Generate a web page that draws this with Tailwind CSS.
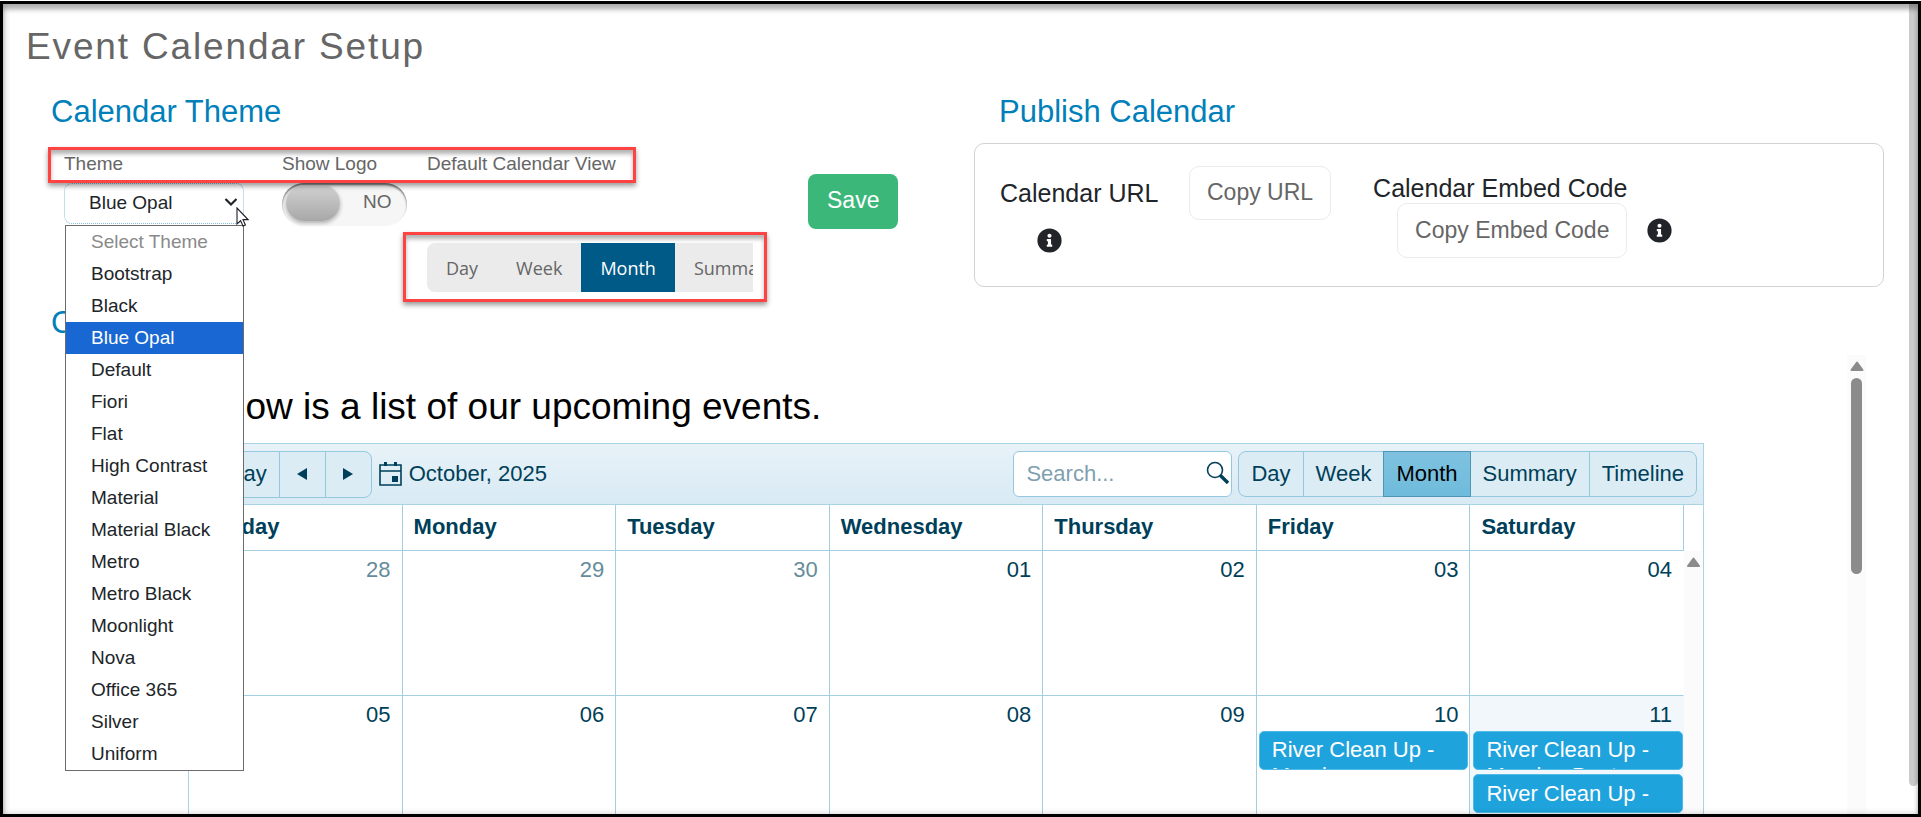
<!DOCTYPE html>
<html lang="en">
<head>
    <meta charset="UTF-8">
    <meta name="viewport" content="width=device-width, initial-scale=1.0">
    <title>Event Calendar Setup</title>
    <script src="https://cdn.jsdelivr.net/npm/@tailwindcss/browser@4"></script>
</head>
<body class="h-screen overflow-hidden bg-white pt-px font-['Liberation_Sans',Arial,sans-serif]">
    <div class="relative h-full overflow-hidden border-[3px] border-black pt-[21px] pl-[45px] pr-[34px]">
        <!-- Window edge shadow and page scrollbar -->
        <div class="pointer-events-none absolute inset-0 z-30 shadow-[inset_0_6px_4px_rgba(0,0,0,0.25),inset_1px_0_6px_rgba(0,0,0,0.2)]"></div>
        <div class="absolute right-0 top-0 h-[782px] w-[9px] rounded-b-md bg-[#cbcbcb]"></div>

        <h1 class="-ml-[22px] text-[37px]/[44px] tracking-wider text-[#666]">Event Calendar Setup</h1>

        <div class="mt-[25px] grid grid-cols-2 gap-4">
            <!-- Calendar theme -->
            <section class="relative">
                <h2 class="pl-[3px] text-[31px]/[36px] text-[#0080ba]">Calendar Theme</h2>
                <div class="pointer-events-none absolute left-0 top-[53px] z-10 h-9 w-[588px] border-[3px] border-[#ff4343] shadow-[0_3px_5px_rgba(0,0,0,0.4),inset_0_4px_4px_rgba(0,0,0,0.3)]"></div>
                <div class="mt-[22px] flex items-start pl-4 text-[19px]/[24px] text-[#666]">
                    <div class="mr-[38px] w-[180px] shrink-0">
                        <label for="theme" class="block">Theme</label>
                        <div class="relative mt-[7px]">
                            <select id="theme" class="block h-[41px] w-full appearance-none rounded-lg border border-dotted border-[#84bfdf] bg-white pb-[2px] pl-6 text-[#212529]">
                                <option>Blue Opal</option>
                            </select>
                            <svg class="pointer-events-none absolute right-[6px] top-[14px] h-[10px] w-[14px]" viewBox="0 0 14 10" fill="none" stroke="#212529" stroke-width="2.2"><path d="M1.5 2 7 7.5 12.5 2"/></svg>
                            <ul role="listbox" aria-label="Theme options" class="absolute left-px top-[42px] z-20 w-[179px] border border-[#6b6b6b] bg-white text-[19px]/[32px] text-[#212529]">
                                <li role="option" class="pl-[25px] text-[#8a8a8a]">Select Theme</li>
                                <li role="option" class="pl-[25px]">Bootstrap</li>
                                <li role="option" class="pl-[25px]">Black</li>
                                <li role="option" aria-selected="true" class="bg-[#1967d2] pl-[25px] text-white">Blue Opal</li>
                                <li role="option" class="pl-[25px]">Default</li>
                                <li role="option" class="pl-[25px]">Fiori</li>
                                <li role="option" class="pl-[25px]">Flat</li>
                                <li role="option" class="pl-[25px]">High Contrast</li>
                                <li role="option" class="pl-[25px]">Material</li>
                                <li role="option" class="pl-[25px]">Material Black</li>
                                <li role="option" class="pl-[25px]">Metro</li>
                                <li role="option" class="pl-[25px]">Metro Black</li>
                                <li role="option" class="pl-[25px]">Moonlight</li>
                                <li role="option" class="pl-[25px]">Nova</li>
                                <li role="option" class="pl-[25px]">Office 365</li>
                                <li role="option" class="pl-[25px]">Silver</li>
                                <li role="option" class="pl-[25px]">Uniform</li>
                            </ul>
                            <!-- Mouse pointer -->
                            <svg class="pointer-events-none absolute left-[172px] top-6 z-20 h-[20px] w-[13px]" viewBox="0 0 13 20" fill="#fff" stroke="#1c1c28" stroke-width="1.1"><path d="M1 1v16l3.6-3.4 2.4 5.4 2.4-1-2.4-5.4h5z"/></svg>
                        </div>
                    </div>
                    <div class="mr-5 w-[125px] shrink-0">
                        <label for="show-logo" class="block">Show Logo</label>
                        <label class="relative mt-[7px] flex h-[43px] items-start rounded-full bg-[#f6f6f6] pl-1 pt-[2px] shadow-[inset_0_2px_2px_rgba(0,0,0,0.5)]">
                            <input type="checkbox" id="show-logo" class="sr-only">
                            <span class="h-9 w-[54px] rounded-full bg-linear-to-b from-[#d2d2d2] to-[#a8a8a8] shadow-[0_2px_4px_rgba(0,0,0,0.3)]"></span>
                            <span class="ml-[23px] pt-[5px]">NO</span>
                        </label>
                    </div>
                    <div class="relative mr-[55px] w-[326px] shrink-0">
                        <span id="view-label" class="block">Default Calendar View</span>
                        <div class="pointer-events-none absolute -left-6 top-20 h-[70px] w-[364px] border-[3px] border-[#ff4343] shadow-[0_3px_5px_rgba(0,0,0,0.4),inset_0_4px_4px_rgba(0,0,0,0.3)]"></div>
                        <div role="group" aria-labelledby="view-label" class="mt-[67px] flex h-[49px] overflow-hidden rounded-l-lg bg-[#ebebeb] font-['Open_Sans','Noto_Sans',sans-serif] text-[18px]">
                            <button class="shrink-0 px-[19px]">Day</button>
                            <button class="shrink-0 px-[19px]">Week</button>
                            <button class="shrink-0 bg-[#005a87] px-[19px] text-white">Month</button>
                            <button class="shrink-0 px-[19px]">Summary</button>
                        </div>
                    </div>
                    <button class="mt-[22px] h-[55px] rounded-lg bg-[#3cb77a] px-[19px] pb-1 text-[23px] text-white">Save</button>
                </div>
            </section>

            <!-- Publish calendar -->
            <section>
                <h2 class="pl-[25px] text-[31px]/[36px] text-[#0080ba]">Publish Calendar</h2>
                <div class="mt-[13px] flex h-36 items-start rounded-[10px] border border-[#d2d2d2] pl-[25px] pt-[22px] text-[25px]/[30px] text-[#212529]">
                    <div class="w-[189px] pt-3">
                        <p>Calendar URL</p>
                        <svg class="ml-[37px] mt-5 size-[25px]" viewBox="0 0 512 512" fill="#212529"><path d="M256 8a248 248 0 1 0 0 496 248 248 0 0 0 0-496zm0 110a42 42 0 1 1 0 84 42 42 0 0 1 0-84zm56 254a12 12 0 0 1-12 12h-88a12 12 0 0 1-12-12v-24a12 12 0 0 1 12-12h12v-64h-12a12 12 0 0 1-12-12v-24a12 12 0 0 1 12-12h64a12 12 0 0 1 12 12v100h12a12 12 0 0 1 12 12z"/></svg>
                    </div>
                    <button class="mr-[42px] h-[54px] rounded-[10px] border border-[#ebebeb] px-[17px] pb-[2px] text-[23px] text-[#666]">Copy URL</button>
                    <div class="flex flex-col items-end pt-[7px]">
                        <p>Calendar Embed Code</p>
                        <button class="h-[55px] rounded-[10px] border border-[#ebebeb] px-[17px] pb-[2px] text-[23px] text-[#666]">Copy Embed Code</button>
                    </div>
                    <svg class="ml-5 mt-[52px] size-[25px]" viewBox="0 0 512 512" fill="#212529"><path d="M256 8a248 248 0 1 0 0 496 248 248 0 0 0 0-496zm0 110a42 42 0 1 1 0 84 42 42 0 0 1 0-84zm56 254a12 12 0 0 1-12 12h-88a12 12 0 0 1-12-12v-24a12 12 0 0 1 12-12h12v-64h-12a12 12 0 0 1-12-12v-24a12 12 0 0 1 12-12h64a12 12 0 0 1 12 12v100h12a12 12 0 0 1 12 12z"/></svg>
                </div>
            </section>
        </div>

        <!-- Calendar preview -->
        <h2 class="mt-[13px] pl-[3px] text-[31px]/[36px] text-[#0080ba]">Calendar</h2>
        <div class="ml-[140px] mr-[18px] mt-[14px] flex">
            <div class="mr-[143px] flex-1 pt-[30px] text-[22px]/[26px] text-[#003f59]">
                <p class="pl-1 text-[37px]/[44px] text-black">Below is a list of our upcoming events.</p>
                <div class="mt-[14px] border border-[#a9d3e6]">
                    <div class="flex h-[61px] items-center border-b border-[#a9d3e6] bg-linear-to-b from-[#e8f2f8] to-[#d8eaf4] pl-[6px] pr-[6px]">
                        <div class="flex h-[47px] overflow-hidden rounded-lg border border-[#94c8df] bg-[#dbecf4]">
                            <button class="px-3">Today</button>
                            <button aria-label="Previous" class="flex w-[46px] items-center justify-center border-l border-[#94c8df]">
                                <svg class="h-3 w-[10px]" viewBox="0 0 10 12" fill="#003f59"><path d="M10 0v12L0 6z"/></svg>
                            </button>
                            <button aria-label="Next" class="flex w-[46px] items-center justify-center border-l border-[#94c8df]">
                                <svg class="h-3 w-[10px]" viewBox="0 0 10 12" fill="#003f59"><path d="M0 0v12l10-6z"/></svg>
                            </button>
                        </div>
                        <button class="ml-[7px] flex items-center gap-[7px]">
                            <svg class="h-6 w-[23px]" viewBox="0 0 23 24" fill="#003f59"><path fill="none" stroke="#003f59" stroke-width="1.6" d="M1 3h21v20H1zM1 9h21"/><path d="M5 0h3v4H5zM15 0h3v4h-3zM13 14h6v6h-6z"/></svg>
                            October, 2025
                        </button>
                        <div class="relative ml-auto mr-[6px] w-[219px]">
                            <input type="text" aria-label="Search" placeholder="Search..." class="h-[46px] w-full rounded-md border border-[#94c8df] bg-white pl-3 placeholder:text-[#7fa0af]">
                            <svg class="absolute right-[3px] top-[10px] size-[23px]" viewBox="0 0 23 23" fill="none" stroke="#003f59"><circle cx="9" cy="9" r="7.5" stroke-width="1.6"/><path stroke-width="3.4" d="M14.2 14.2 22 22"/></svg>
                        </div>
                        <div class="flex h-[46px] rounded-lg border border-[#94c8df] bg-[#dbecf4]">
                            <button class="px-3">Day</button>
                            <button class="border-l border-[#94c8df] px-3">Week</button>
                            <button class="-my-px border border-[#4f94b3] bg-linear-to-b from-[#7ec2e0] to-[#6fbbdc] px-3 text-black">Month</button>
                            <button class="px-3">Summary</button>
                            <button class="border-l border-[#94c8df] px-3">Timeline</button>
                        </div>
                    </div>
                    <div class="flex">
                        <div class="min-w-0 flex-1">
                            <table class="w-full table-fixed border-separate border-spacing-0">
                                <thead>
                                    <tr class="text-left *:h-[46px] *:border-b *:border-r *:border-[#a3cfe2] *:pb-[2px] *:pl-[11px] *:font-bold">
                                        <th>Sunday</th>
                                        <th>Monday</th>
                                        <th>Tuesday</th>
                                        <th>Wednesday</th>
                                        <th>Thursday</th>
                                        <th>Friday</th>
                                        <th>Saturday</th>
                                    </tr>
                                </thead>
                                <tbody class="align-top">
                                    <tr class="*:h-[145px] *:border-b *:border-r *:border-[#a3cfe2] *:pt-[6px] *:pr-[11px] *:text-right">
                                        <td class="text-[#668c9b]">28</td>
                                        <td class="text-[#668c9b]">29</td>
                                        <td class="text-[#668c9b]">30</td>
                                        <td>01</td>
                                        <td>02</td>
                                        <td>03</td>
                                        <td class="border-r-transparent!">04</td>
                                    </tr>
                                    <tr class="*:h-[145px] *:border-b *:border-r *:border-[#a3cfe2] *:pt-[6px]">
                                        <td><p class="pr-[11px] text-right">05</p></td>
                                        <td><p class="pr-[11px] text-right">06</p></td>
                                        <td><p class="pr-[11px] text-right">07</p></td>
                                        <td><p class="pr-[11px] text-right">08</p></td>
                                        <td><p class="pr-[11px] text-right">09</p></td>
                                        <td>
                                            <p class="pr-[11px] text-right">10</p>
                                            <a href="#" class="ml-[2px] mr-px mt-[3px] block h-[39px] overflow-hidden rounded-[5px] border border-[#4fbbe6] bg-[#1fa3dd] pl-3 pr-6 pt-[5px] text-white">River Clean Up - Morning</a>
                                        </td>
                                        <td class="border-r-transparent! bg-[#f2f7fc]">
                                            <p class="pr-[11px] text-right">11</p>
                                            <a href="#" class="ml-[3px] mt-[3px] block h-[39px] overflow-hidden rounded-[5px] border border-[#4fbbe6] bg-[#1fa3dd] pl-3 pr-6 pt-[5px] text-white">River Clean Up - Morning Boat</a>
                                            <a href="#" class="ml-[3px] mt-1 block h-[39px] overflow-hidden rounded-[5px] border border-[#4fbbe6] bg-[#1fa3dd] pl-3 pr-6 pt-[6px] text-white">River Clean Up -</a>
                                        </td>
                                    </tr>
                                </tbody>
                            </table>
                        </div>
                        <div class="mt-[46px] w-[19px] bg-[#fbfbfb] pt-[6px]">
                            <svg class="mx-auto h-[10px] w-[13px]" viewBox="0 0 13 10" fill="#8b8b8b" stroke="#8b8b8b" stroke-width="2" stroke-linejoin="round"><path d="M6.5 1.5 12 9H1z"/></svg>
                        </div>
                    </div>
                </div>
            </div>
            <!-- Preview scrollbar -->
            <div class="w-[19px] bg-[#fbfbfb] pt-[6px]">
                <svg class="mx-auto h-[10px] w-[14px]" viewBox="0 0 13 10" fill="#8b8b8b" stroke="#8b8b8b" stroke-width="2" stroke-linejoin="round"><path d="M6.5 1.5 12 9H1z"/></svg>
                <div class="mx-auto mt-[7px] h-[196px] w-[11px] rounded-full bg-[#8b8b8b]"></div>
            </div>
        </div>
    </div>
</body>
</html>
